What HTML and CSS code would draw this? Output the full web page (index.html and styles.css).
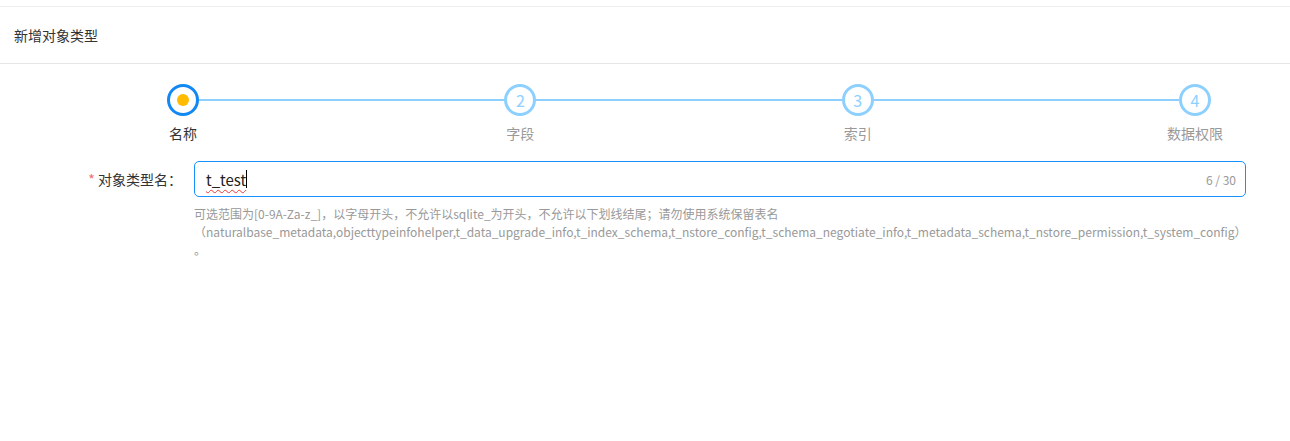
FILE: index.html
```html
<!DOCTYPE html>
<html lang="zh-CN">
<head>
    <meta charset="UTF-8">
    <title>新增对象类型</title>
    <link rel="stylesheet" href="styles.css">
</head>
<body>
    <div class="card">
        <div class="card-header">新增对象类型</div>

        <div class="steps">
            <div class="step current">
                <div class="circle"><span class="dot"></span></div>
                <div class="step-title">名称</div>
            </div>
            <div class="line"></div>
            <div class="step">
                <div class="circle">2</div>
                <div class="step-title">字段</div>
            </div>
            <div class="line"></div>
            <div class="step">
                <div class="circle">3</div>
                <div class="step-title">索引</div>
            </div>
            <div class="line"></div>
            <div class="step">
                <div class="circle">4</div>
                <div class="step-title">数据权限</div>
            </div>
        </div>

        <div class="form-row">
            <label class="form-label"><span class="required">*</span> 对象类型名：</label>
            <div class="form-field">
                <div class="input focused">
                    <span class="input-text">t_test</span><span class="caret"></span>
                    <span class="counter">6 / 30</span>
                </div>
                <div class="hint">
                    可选范围为[0-9A-Za-z_]，以字母开头，不允许以sqlite_为开头，不允许以下划线结尾；请勿使用系统保留表名<br>
                    （naturalbase_metadata,objecttypeinfohelper,t_data_upgrade_info,t_index_schema,t_nstore_config,t_schema_negotiate_info,t_metadata_schema,t_nstore_permission,t_system_config）<br>
                    。
                </div>
            </div>
        </div>
    </div>
</body>
</html>
```

FILE: styles.css
```css
body {
    margin: 0;
    padding-top: 6px;
    background-color: #fff;
    font-family: "Noto Sans CJK SC", "Microsoft YaHei", sans-serif;
    color: #333;
}
.card {
    border-top: 1px solid #efefef;
    height: 434px;
}
.card-header {
    height: 56px;
    padding: 0 14px;
    display: flex;
    align-items: center;
    font-size: 14px;
    color: #333;
    border-bottom: 1px solid #e6e6e6;
}
.steps {
    display: flex;
    align-items: flex-start;
    margin: 20px 0 0 167px;
    width: 1044px;
}
.step {
    width: 32px;
    display: flex;
    flex-direction: column;
    align-items: center;
}
.circle {
    width: 32px;
    height: 32px;
    box-sizing: border-box;
    border: 3px solid #8dd0ff;
    border-radius: 50%;
    display: flex;
    align-items: center;
    justify-content: center;
    color: #8dd0ff;
    font-size: 16px;
    line-height: 1;
}
.current .circle {
    border-color: #1288f5;
}
.dot {
    width: 12px;
    height: 12px;
    border-radius: 50%;
    background-color: #ffbb00;
}
.step-title {
    margin-top: 7px;
    font-size: 14px;
    line-height: 20px;
    white-space: nowrap;
    color: #999;
}
.current .step-title {
    color: #333;
}
.line {
    flex: 1;
    height: 2px;
    margin-top: 15px;
    background-color: #8dd0ff;
}
.form-row {
    display: flex;
    margin-top: 18px;
}
.form-label {
    width: 182px;
    padding-right: 12px;
    height: 36px;
    line-height: 36px;
    text-align: right;
    font-size: 14px;
    color: #333;
}
.required {
    color: #f56c6c;
}
.form-field {
    width: 1052px;
}
.input {
    height: 36px;
    box-sizing: border-box;
    border: 1px solid #1890ff;
    border-radius: 5px;
    padding: 0 9px 0 11px;
    display: flex;
    align-items: center;
}
.input-text {
    font-size: 15px;
    color: #222;
    text-decoration: underline wavy #e53935;
    text-underline-offset: 3px;
    text-decoration-thickness: 1px;
}
.caret {
    width: 1px;
    height: 18px;
    background-color: #000;
}
.counter {
    margin-left: auto;
    font-size: 12px;
    color: #999;
}
.hint {
    margin-top: 8px;
    font-size: 12px;
    line-height: 18px;
    color: #999;
    white-space: nowrap;
}
```
